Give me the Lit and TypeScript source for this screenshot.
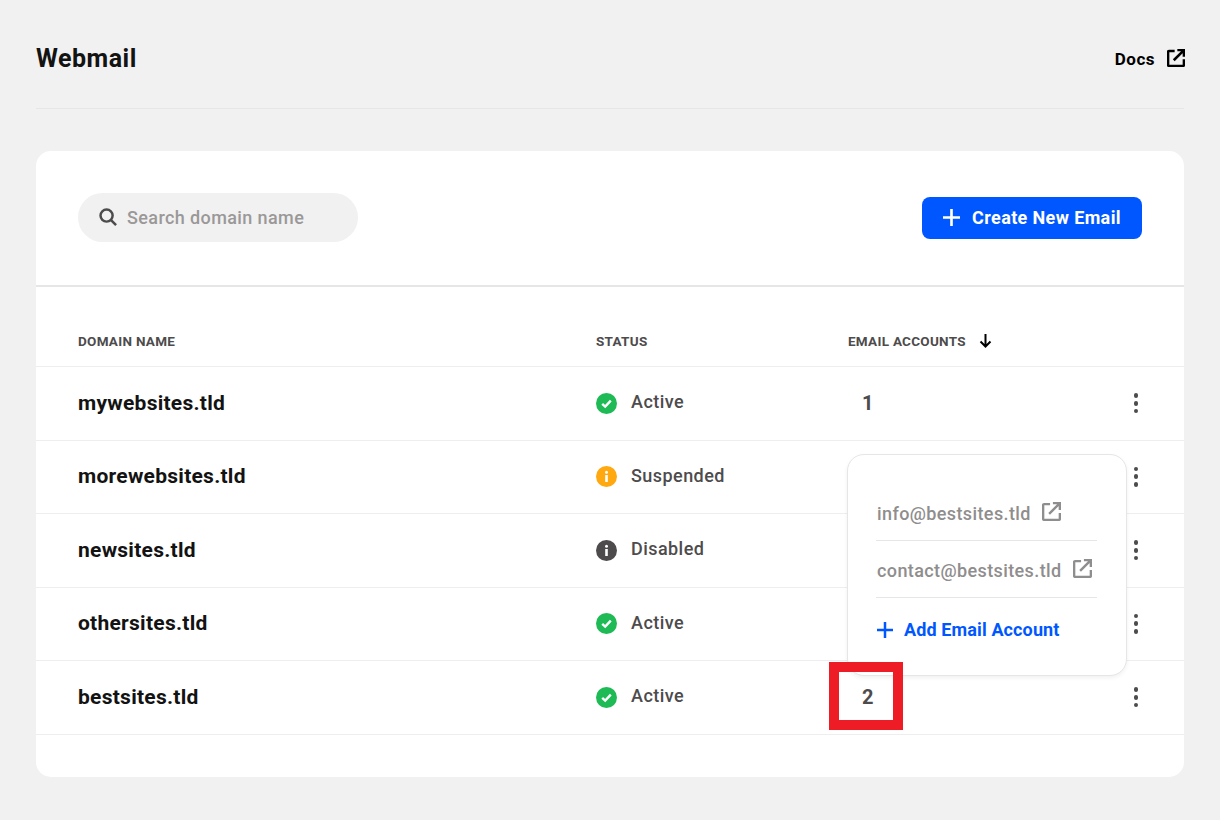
import { LitElement, html, css, svg } from "lit";
import { customElement } from "lit/decorators.js";

const ext = (c: string, s: number, w = 2.5) => html`<svg width=${s} height=${s} viewBox="0 0 20 20" fill="none" stroke=${c} stroke-width=${w}><path d="M8.5 2.2H2.2a1 1 0 0 0-1 1v14.6a1 1 0 0 0 1 1h15.6a1 1 0 0 0 1-1V11.5"/><path d="M7.5 12.5 18 2M11.5 1.2h7.3v7.3"/></svg>`;
const plus = (c: string, s: number) => html`<svg width=${s} height=${s} viewBox="0 0 18 18" fill="none" stroke=${c} stroke-width="2.8"><path d="M9 0v18M0 9h18"/></svg>`;
const icon = (k: string) => {
  const col = k === "Active" ? "#1dba55" : k === "Suspended" ? "#ffa80f" : "#4d4b4c";
  const inner = k === "Active"
    ? svg`<path d="M6.2 10.8l3 2.8 5.6-6" fill="none" stroke="#fff" stroke-width="2.4"/>`
    : svg`<circle cx="10.5" cy="6.3" r="1.5" fill="#fff"/><rect x="9.2" y="9" width="2.6" height="7" fill="#fff"/>`;
  return html`<svg class="st" width="21" height="21" viewBox="0 0 21 21"><circle cx="10.5" cy="10.5" r="10.5" fill=${col}/>${inner}</svg>`;
};

const rows = [
  ["mywebsites.tld", "Active", "1"],
  ["morewebsites.tld", "Suspended", ""],
  ["newsites.tld", "Disabled", ""],
  ["othersites.tld", "Active", ""],
  ["bestsites.tld", "Active", "2"],
];

@customElement("app-root")
export class AppRoot extends LitElement {
  static styles = css`
    :host { display: block; min-height: 820px; background: #f1f1f1; font-family: Roboto, "Liberation Sans", sans-serif; color: #4d4b4c; }
    .page { padding: 0 36px; }
    .top { height: 108px; border-bottom: 1px solid #e6e6e6; display: flex; justify-content: space-between; align-items: center; }
    h1 { margin: 8px 0 0; font-size: 25px; font-weight: 700; color: #131313; letter-spacing: 0.5px; }
    .docs { display: flex; align-items: center; gap: 12px; margin-top: 10px; font-size: 17px; font-weight: 700; color: #000; letter-spacing: 0.5px; }
    .docs svg { display: block; margin-right: -1px; margin-top: -2px; }
    .card { position: relative; margin-top: 42px; background: #fff; border-radius: 15px; padding-bottom: 42.5px; }
    .tools { height: 134px; border-bottom: 2px solid #e6e6e6; padding: 0 42px; display: flex; justify-content: space-between; align-items: center; }
    .search { width: 280px; height: 49px; margin-top: -2px; border-radius: 25px; background: #f1f1f1; display: flex; align-items: center; gap: 10px; padding-left: 21px; box-sizing: border-box; font-size: 18px; font-weight: 500; color: #9a9898; letter-spacing: 0.39px; }
    .search svg { display: block; }
    .btn { width: 220px; height: 42px; padding-bottom: 2px; box-sizing: border-box; border-radius: 8px; background: #0057ff; color: #fff; font-size: 18px; font-weight: 700; display: flex; align-items: center; justify-content: center; gap: 12px; letter-spacing: 0.375px; }
    .btn svg { display: block; }
    .row { display: grid; grid-template-columns: 518px 252px 1fr 28px; align-items: center; padding: 0 34px 0 42px; border-bottom: 1px solid #eeeeee; box-sizing: border-box; height: 73.5px; }
    .head { height: 80px; padding-top: 28px; font-size: 13.5px; font-weight: 700; color: #4d4b4c; letter-spacing: 0.28px; }
    .ea { display: flex; align-items: center; gap: 13px; }
    .ea svg { display: block; }
    .name { font-size: 21px; font-weight: 700; color: #131313; letter-spacing: 0.26px; margin-bottom: 1px; }
    .status { display: flex; align-items: center; gap: 14px; font-size: 18px; font-weight: 500; letter-spacing: 0.44px; }
    .status span { margin-bottom: 3px; }
    .st { display: block; flex: none; }
    .count { font-size: 20px; font-weight: 700; padding-left: 14px; }
    .dots { display: flex; flex-direction: column; gap: 3px; align-items: center; width: 4px; justify-self: center; }
    .dots i { width: 4.6px; height: 4.6px; border-radius: 50%; background: #4d4b4c; flex: none; }
    .pop { position: absolute; left: 811px; top: 303px; width: 280px; height: 222px; box-sizing: border-box; background: #fff; border: 1px solid #e6e6e6; border-radius: 17px; box-shadow: 0 2px 4px rgba(0,0,0,.06); padding: 29px 29px 0 28px; display: flex; flex-direction: column; }
    .mail { height: 57px; border-bottom: 1px solid #e6e6e6; display: flex; align-items: flex-start; gap: 11px; font-size: 18px; font-weight: 500; color: #8f8d8d; padding: 19px 0 0 1px; box-sizing: border-box; letter-spacing: 0.39px; }
    .mail svg { display: block; margin-top: -1px; }
    .add { display: flex; align-items: center; gap: 11px; padding-left: 1px; font-size: 18px; font-weight: 700; color: #0057ff; margin-top: 21px; letter-spacing: 0.12px; }
    .add svg { display: block; }
    .mark { position: absolute; left: 793px; top: 511px; width: 74px; height: 68px; box-sizing: border-box; border: 10px solid #ee1c25; }
  `;

  render() {
    return html`<div class="page">
      <div class="top"><h1>Webmail</h1><div class="docs">Docs ${ext("#000", 18, 2.8)}</div></div>
      <div class="card">
        <div class="tools">
          <div class="search">
            <svg width="18" height="18" viewBox="0 0 19 19" fill="none" stroke="#4d4b4c" stroke-width="2.6"><circle cx="8" cy="8" r="6.4"/><path d="M12.5 12.5 18 18"/></svg>
            Search domain name
          </div>
          <div class="btn">${plus("#fff", 17)} Create New Email</div>
        </div>
        <div class="row head"><div>DOMAIN NAME</div><div>STATUS</div>
          <div class="ea">EMAIL ACCOUNTS <svg width="13" height="14" viewBox="0 0 13 14" fill="none" stroke="#000" stroke-width="2"><path d="M6.5 0v12.5M1.5 7.5l5 5 5-5"/></svg></div><div></div></div>
        ${rows.map(r => html`<div class="row">
          <div class="name">${r[0]}</div>
          <div class="status">${icon(r[1])}<span>${r[1]}</span></div>
          <div class="count">${r[2]}</div>
          <div class="dots"><i></i><i></i><i></i></div>
        </div>`)}
        <div class="pop">
          <div class="mail">info@bestsites.tld ${ext("#8f8d8d", 19)}</div>
          <div class="mail">contact@bestsites.tld ${ext("#8f8d8d", 19)}</div>
          <div class="add">${plus("#0057ff", 16)} Add Email Account</div>
        </div>
        <div class="mark"></div>
      </div>
    </div>`;
  }
}
